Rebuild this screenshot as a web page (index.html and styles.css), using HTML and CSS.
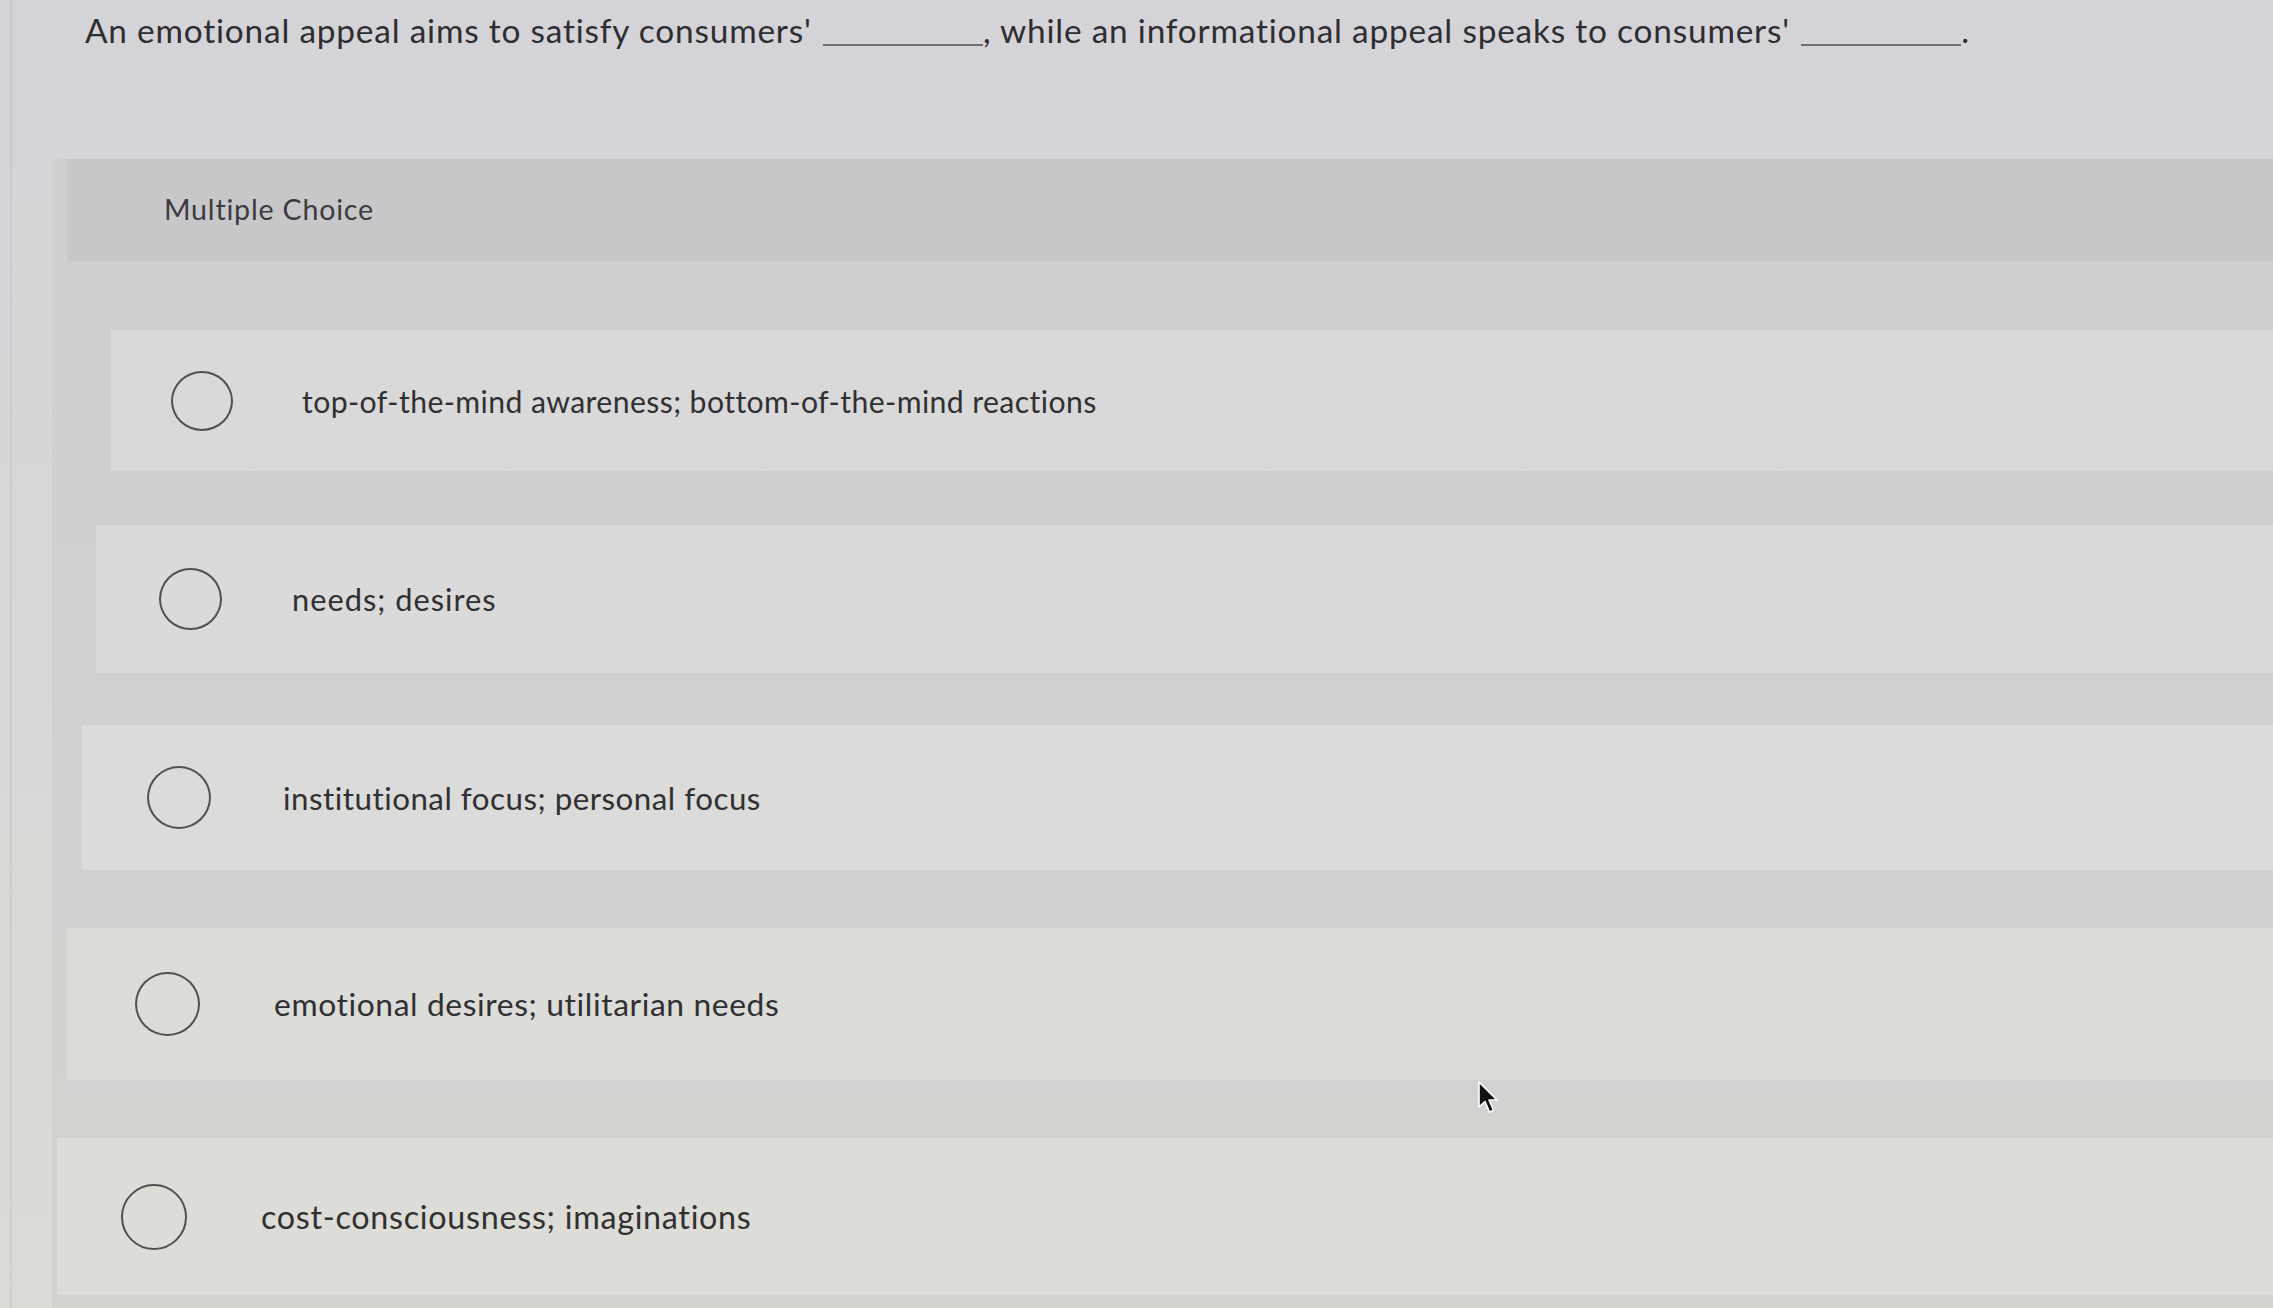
FILE: index.html
```html
<!DOCTYPE html>
<html lang="en">
<head>
<meta charset="utf-8">
<title>Multiple Choice</title>
<link rel="stylesheet" href="styles.css">
</head>
<body>
<div class="screen">
  <div class="question">
    <p class="prompt">An emotional appeal aims to satisfy consumers' <span class="blank"></span>, while an informational appeal speaks to consumers' <span class="blank"></span>.</p>
  </div>
  <section class="mc">
    <div class="mc-head">Multiple Choice</div>
    <div class="mc-options">
      <label class="opt opt-1"><span class="radio"></span><span class="txt">top-of-the-mind awareness; bottom-of-the-mind reactions</span></label>
      <label class="opt opt-2"><span class="radio"></span><span class="txt">needs; desires</span></label>
      <label class="opt opt-3"><span class="radio"></span><span class="txt">institutional focus; personal focus</span></label>
      <label class="opt opt-4"><span class="radio"></span><span class="txt">emotional desires; utilitarian needs</span></label>
      <label class="opt opt-5"><span class="radio"></span><span class="txt">cost-consciousness; imaginations</span></label>
    </div>
  </section>
</div>
<svg class="cursor" width="24" height="34" viewBox="0 0 24 34" aria-hidden="true">
  <path d="M2 1 L2 26 L8 20.5 L12.5 31 L16.5 29.3 L12 19 L20 19 Z" fill="#111" stroke="#fff" stroke-width="1.6" stroke-linejoin="round"/>
</svg>
</body>
</html>
```

FILE: styles.css
```css
html, body {
  margin: 0;
  padding: 0;
}
body {
  width: 2273px;
  height: 1308px;
  overflow: hidden;
  position: relative;
  font-family: Lato, "Liberation Sans", sans-serif;
  color: #363638;
  background: linear-gradient(180deg, #d4d4d8 0%, #d6d6d8 35%, #d9d9d6 70%, #dcdcd6 100%);
}
.screen {
  height: 1308px;
  display: flex;
  flex-direction: column;
  border-left: 2px solid rgba(150,150,155,0.18);
  margin-left: 10px;
}
.question {
  height: 159px;
  box-sizing: border-box;
  padding: 9px 0 0 73px;
}
.prompt {
  margin: 0;
  font-size: 33.4px;
  line-height: 42px;
  color: #2e2e31;
  letter-spacing: 0.8px;
}
.blank {
  display: inline-block;
  width: 160px;
  height: 2px;
  background: #6f6f72;
  vertical-align: -3px;
  margin-left: 2px;
}
.mc {
  flex: 1;
  display: flex;
  flex-direction: column;
  margin-left: 40px;
  background: linear-gradient(180deg, #cfcfd2 0%, #d0d0d1 50%, #d3d3cf 100%);
}
.mc-head {
  height: 102px;
  margin-left: 15px;
  display: flex;
  align-items: center;
  padding-left: 97px;
  padding-bottom: 2px;
  box-sizing: border-box;
  background: #c7c7ca;
  font-size: 28.6px;
  letter-spacing: 0.8px;
  color: #3b3b3e;
}
.mc-options {
  flex: 1;
  display: flex;
  flex-direction: column;
  padding-top: 69px;
}
.opt {
  display: flex;
  align-items: center;
  background: #d8d8d9;
  box-sizing: border-box;
}
.radio {
  flex: none;
  width: 62px;
  height: 60px;
  box-sizing: border-box;
  border: 2.5px solid #505053;
  border-radius: 50%;
}
.txt {
  white-space: nowrap;
  color: #303032;
  letter-spacing: 0.6px;
}
.opt-1 {
  height: 141px;
  margin-left: 59px;
  padding-left: 60px;
  background: #d9d9da;
}
.opt-1 .txt { font-size: 30.2px; margin-left: 69px; letter-spacing: 0.4px; }
.opt-2 {
  height: 148px;
  margin-top: 54px;
  margin-left: 44px;
  padding-left: 63px;
  background: #dadada;
}
.opt-2 .radio { width: 63px; height: 62px; }
.opt-2 .txt { font-size: 30.8px; margin-left: 70px; letter-spacing: 1px; }
.opt-3 {
  height: 145px;
  margin-top: 52px;
  margin-left: 30px;
  padding-left: 65px;
  background: #dbdbd9;
}
.opt-3 .radio { width: 64px; height: 63px; }
.opt-3 .txt { font-size: 31.3px; margin-left: 72px; letter-spacing: 0.5px; }
.opt-4 {
  height: 152px;
  margin-top: 58px;
  margin-left: 15px;
  padding-left: 68px;
  background: #dcdcd8;
}
.opt-4 .radio { width: 65px; height: 64px; }
.opt-4 .txt { font-size: 31.8px; margin-left: 74px; letter-spacing: 0.6px; }
.opt-5 {
  height: 157px;
  margin-top: 58px;
  margin-left: 5px;
  padding-left: 64px;
  background: #dddcd7;
}
.opt-5 .radio { width: 66px; height: 66px; }
.opt-5 .txt { font-size: 32.3px; margin-left: 74px; letter-spacing: 0.7px; }
.cursor {
  position: absolute;
  left: 1477px;
  top: 1081px;
}
```
